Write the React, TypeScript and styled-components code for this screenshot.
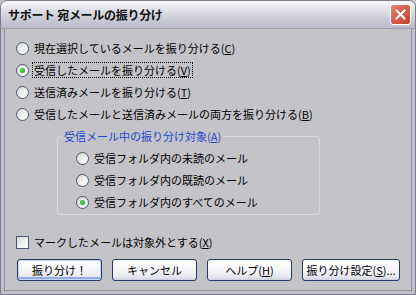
import React from "react";
import styled, { createGlobalStyle, css } from "styled-components";

const Global = createGlobalStyle`
  html, body {
    margin: 0;
    padding: 0;
    background: #c4c3c7;
  }
  body {
    font-family: "Noto Sans CJK JP", "Noto Sans", sans-serif;
    font-size: 11px;
    color: #000;
  }
`;

const Window = styled.div`
  width: 416px;
  height: 295px;
  box-sizing: border-box;
  display: flex;
  flex-direction: column;
  background: #c0bfcb;
  border: 1px solid #7d7c8a;
  border-radius: 7px 7px 0 0;
  overflow: hidden;
`;

const TitleBar = styled.div`
  height: 27px;
  flex: none;
  display: flex;
  align-items: center;
  justify-content: space-between;
  padding: 0 4px 0 7px;
  background: linear-gradient(#fbfbfd 0%, #e6e6ee 25%, #cfcfdb 60%, #b9b9c9 100%);
  border-bottom: 1px solid #9f9eae;
`;

const Title = styled.span`
  font-weight: bold;
  font-size: 12px;
  letter-spacing: -0.3px;
  color: #111;
`;

const CloseButton = styled.div`
  width: 19px;
  height: 19px;
  border: 1px solid #fff;
  border-radius: 3px;
  background: linear-gradient(135deg, #e9877a 0%, #d8604e 45%, #c0412c 100%);
  display: flex;
  align-items: center;
  justify-content: center;
`;

const Client = styled.div`
  flex: 1;
  margin: 0 3px 3px 3px;
  background: #c4c3c7;
  border: 1px solid #8e8d99;
  border-top: none;
  padding: 8px 0 0 11px;
  display: flex;
  flex-direction: column;
`;

const Row = styled.label`
  height: 22px;
  display: flex;
  align-items: center;
  gap: 3px;
  white-space: nowrap;
`;

const Radio = styled.span<{ $on?: boolean }>`
  width: 13px;
  height: 13px;
  box-sizing: border-box;
  border-radius: 50%;
  border: 1px solid #4a5a72;
  background: linear-gradient(135deg, #d4d3d0 0%, #f2f2f0 55%, #ffffff 100%);
  display: flex;
  align-items: center;
  justify-content: center;
  flex: none;
  ${(p) =>
    p.$on &&
    css`
      &::after {
        content: "";
        width: 5px;
        height: 5px;
        border-radius: 50%;
        background: radial-gradient(circle at 40% 40%, #5fd45f, #1f9a1f);
      }
    `}
`;

const Check = styled.span`
  width: 13px;
  height: 13px;
  box-sizing: border-box;
  border: 1px solid #4a5a72;
  background: linear-gradient(135deg, #d4d3d0 0%, #f2f2f0 55%, #ffffff 100%);
  flex: none;
`;

const Text = styled.span<{ $focus?: boolean }>`
  line-height: 14px;
  padding: 0 1px;
  border: 1px dotted ${(p) => (p.$focus ? "#000" : "transparent")};
`;

const Key = styled.u`
  text-decoration: underline;
`;

const Group = styled.fieldset`
  margin: 4px 0 0 41px;
  width: 263px;
  box-sizing: border-box;
  border: 1px solid #d8d7db;
  border-radius: 4px;
  padding: 4px 0 1px 18px;
`;

const Legend = styled.legend`
  color: #1c46d0;
  padding: 0 2px;
  margin-left: -14px;
  line-height: 14px;
`;

const CheckRow = styled(Row)`
  margin-top: 16px;
`;

const Buttons = styled.div`
  display: flex;
  gap: 10px;
  margin: 6px 0 0 1px;
`;

const Button = styled.button<{ $w?: number; $default?: boolean }>`
  width: ${(p) => p.$w ?? 85}px;
  height: 22px;
  box-sizing: border-box;
  border: 1px solid #2b3a66;
  border-radius: 3px;
  background: linear-gradient(#ffffff 0%, #f6f6fa 50%, #e6e6ef 85%, #cfd0de 100%);
  font-family: inherit;
  font-size: 11px;
  color: #000;
  padding: 0;
  white-space: nowrap;
  ${(p) =>
    p.$default &&
    css`
      box-shadow: inset 0 0 0 1px #c5d9f7, inset 0 -2px 0 1px #8fb0e8;
    `}
`;

const items = [
  { t: "現在選択しているメールを振り分ける", k: "C" },
  { t: "受信したメールを振り分ける", k: "V", on: true, focus: true },
  { t: "送信済みメールを振り分ける", k: "T" },
  { t: "受信したメールと送信済みメールの両方を振り分ける", k: "B" },
];

const groupItems = [
  { t: "受信フォルダ内の未読のメール" },
  { t: "受信フォルダ内の既読のメール" },
  { t: "受信フォルダ内のすべてのメール", on: true },
];

export default function App() {
  return (
    <>
      <Global />
      <Window>
        <TitleBar>
          <Title>サポート 宛メールの振り分け</Title>
          <CloseButton>
            <svg width="11" height="11" viewBox="0 0 11 11">
              <path d="M1.5 1.5 L9.5 9.5 M9.5 1.5 L1.5 9.5" stroke="#fff" strokeWidth="2" strokeLinecap="square" />
            </svg>
          </CloseButton>
        </TitleBar>
        <Client>
          {items.map((it) => (
            <Row key={it.k}>
              <Radio $on={it.on} />
              <Text $focus={it.focus}>
                {it.t}(<Key>{it.k}</Key>)
              </Text>
            </Row>
          ))}
          <Group>
            <Legend>
              受信メール中の振り分け対象(<Key>A</Key>)
            </Legend>
            {groupItems.map((it) => (
              <Row key={it.t}>
                <Radio $on={it.on} />
                <Text>{it.t}</Text>
              </Row>
            ))}
          </Group>
          <CheckRow>
            <Check />
            <Text>
              マークしたメールは対象外とする(<Key>X</Key>)
            </Text>
          </CheckRow>
          <Buttons>
            <Button $default>振り分け！</Button>
            <Button>キャンセル</Button>
            <Button>
              ヘルプ(<Key>H</Key>)
            </Button>
            <Button $w={98}>
              振り分け設定(<Key>S</Key>)...
            </Button>
          </Buttons>
        </Client>
      </Window>
    </>
  );
}
